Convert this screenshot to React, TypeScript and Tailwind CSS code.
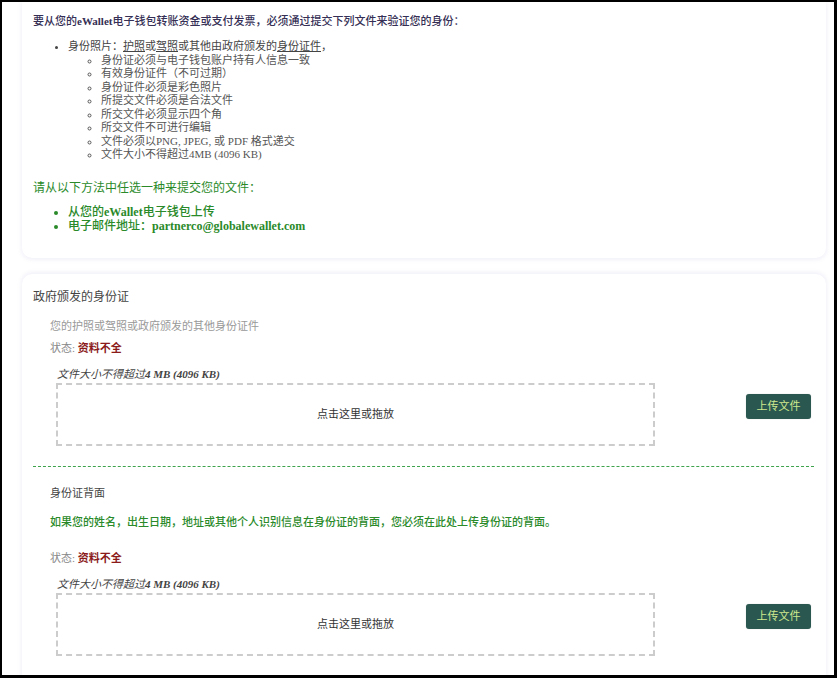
import React from "react";

const font = { fontFamily: '"Liberation Serif", "Noto Sans CJK SC", serif' };

function UploadRow() {
  return (
    <div className="flex items-start">
      <div className="ml-[23px] w-[599px] h-[63px] border-2 border-dashed border-[#cccccc] flex items-center justify-center text-[11px] text-[#333]">
        点击这里或拖放
      </div>
      <div className="flex-1" />
      <button className="mt-[11px] mr-[15px] w-[65px] h-[25px] rounded-[3px] bg-[#2a5850] text-[#cfe98e] text-[11px] shadow-[0_0_1px_rgba(0,0,0,0.3)]">
        上传文件
      </button>
    </div>
  );
}

export default function App() {
  const subs = [
    "身份证必须与电子钱包账户持有人信息一致",
    "有效身份证件（不可过期）",
    "身份证件必须是彩色照片",
    "所提交文件必须是合法文件",
    "所交文件必须显示四个角",
    "所交文件不可进行编辑",
    "文件必须以PNG, JPEG, 或 PDF 格式递交",
    "文件大小不得超过4MB (4096 KB)",
  ];
  return (
    <div
      style={font}
      className="w-[837px] h-[678px] overflow-hidden bg-white border-l-2 border-t-2 border-r-[3px] border-b-[3px] border-black"
    >
      <div className="pl-[20px] pr-[8px]">
        {/* Card 1 */}
        <div className="rounded-b-[10px] bg-white shadow-[0_1px_5px_rgba(110,110,200,0.14)] pl-[11px] pt-[11px] pb-[25px]">
          <p className="text-[11px] leading-[16px] font-medium text-[#352f55]">
            要从您的<span className="font-bold">eWallet</span>电子钱包转账资金或支付发票，必须通过提交下列文件来验证您的身份：
          </p>
          <ul className="mt-[11px] list-disc pl-[35px] text-[11px] leading-[13.5px] text-[#444]">
            <li>
              身份照片：<span className="underline">护照</span>或<span className="underline">驾照</span>或其他由政府颁发的<span className="underline">身份证件</span>，
              <ul className="list-[circle] pl-[33px] text-[#555]">
                {subs.map((s) => (
                  <li key={s}>{s}</li>
                ))}
              </ul>
            </li>
          </ul>
          <p className="mt-[18px] text-[12px] leading-[16px] text-[#2a8a2a]">
            请从以下方法中任选一种来提交您的文件：
          </p>
          <ul className="mt-[9px] list-disc pl-[35px] text-[12px] leading-[14px] text-[#2a8a2a] font-medium">
            <li>
              从您的<span className="font-bold">eWallet</span>电子钱包上传
            </li>
            <li>
              电子邮件地址：<span className="font-bold">partnerco@globalewallet.com</span>
            </li>
          </ul>
        </div>

        {/* Card 2 */}
        <div className="mt-[16px] rounded-t-[10px] bg-white shadow-[0_-1px_5px_rgba(110,110,200,0.14)] pl-[11px] pt-[15px] h-[420px]">
          <p className="text-[12px] leading-[16px] text-[#444]">政府颁发的身份证</p>
          <div className="pl-[17px]">
            <p className="mt-[13px] text-[11px] leading-[16px] text-[#999]">您的护照或驾照或政府颁发的其他身份证件</p>
            <p className="mt-[6px] text-[11px] leading-[16px] text-[#888]">
              状态: <span className="text-[#8b1a1a] font-semibold">资料不全</span>
            </p>
          </div>
          <p className="mt-[11px] mb-[2px] pl-[24px] text-[11px] leading-[14px] italic font-bold text-[#444]">
            <span className="font-normal">文件大小不得超过</span>4 MB (4096 KB)
          </p>
          <UploadRow />
          <div className="mt-[20px] mr-[12px] border-t border-dashed border-[#3fa34d]" />
          <div className="pl-[17px]">
            <p className="mt-[18px] text-[11px] leading-[16px] text-[#444]">身份证背面</p>
            <p className="mt-[13px] text-[11px] leading-[16px] text-[#2a8a2a] font-medium">
              如果您的姓名，出生日期，地址或其他个人识别信息在身份证的背面，您必须在此处上传身份证的背面。
            </p>
            <p className="mt-[20px] text-[11px] leading-[16px] text-[#888]">
              状态: <span className="text-[#8b1a1a] font-semibold">资料不全</span>
            </p>
          </div>
          <p className="mt-[11px] mb-[2px] pl-[24px] text-[11px] leading-[14px] italic font-bold text-[#444]">
            <span className="font-normal">文件大小不得超过</span>4 MB (4096 KB)
          </p>
          <UploadRow />
        </div>
      </div>
    </div>
  );
}
